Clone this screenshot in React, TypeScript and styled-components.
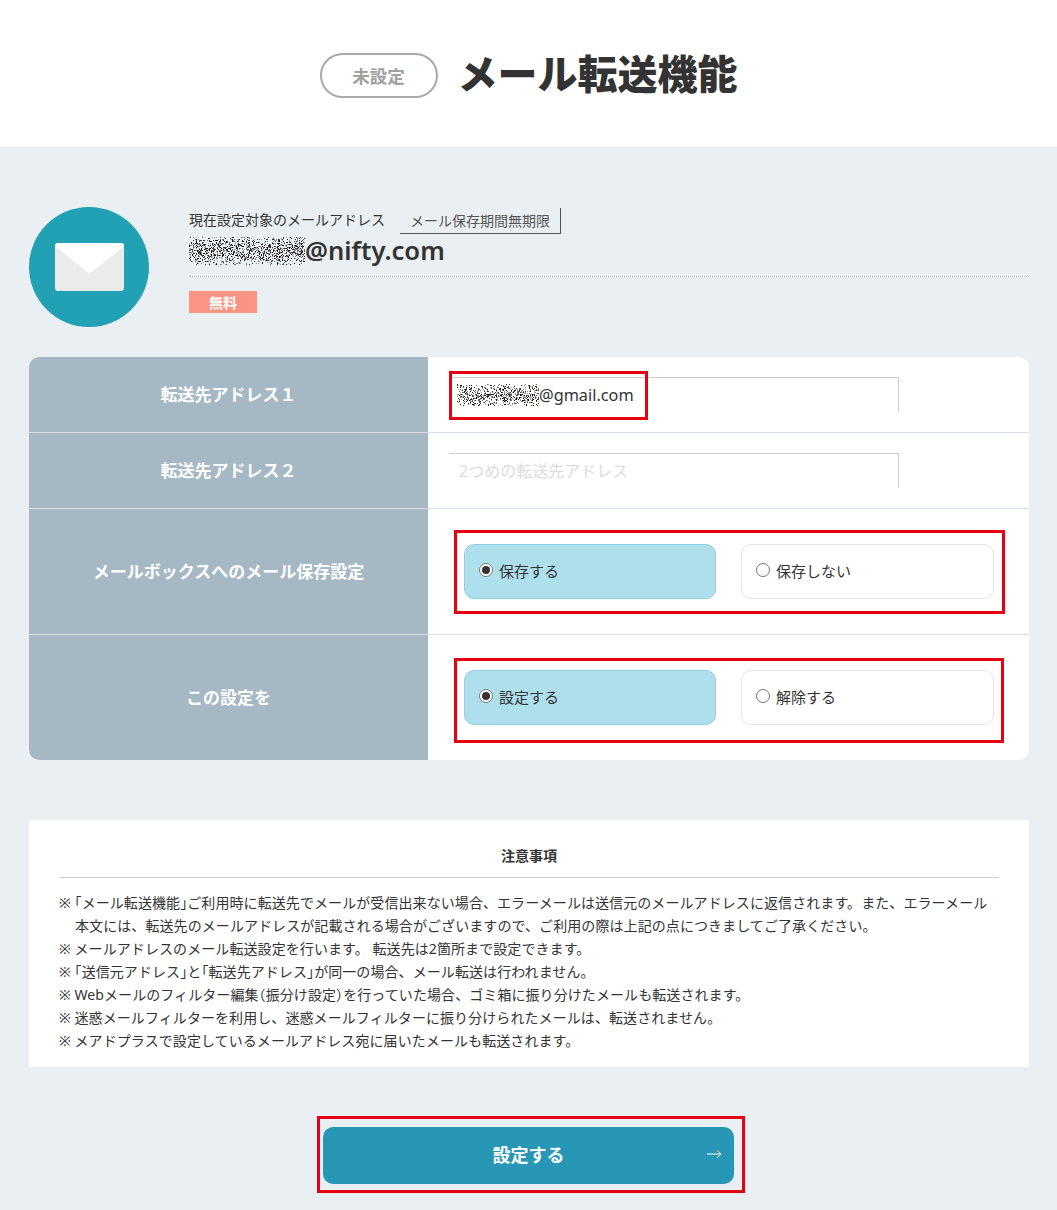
import styled, { createGlobalStyle } from "styled-components";

const GlobalStyle = createGlobalStyle`
  html, body {
    margin: 0;
    padding: 0;
    background: #e9eff2;
    color: #333;
    font-family: "Noto Sans", "Noto Sans CJK JP", sans-serif;
  }
  * {
    box-sizing: border-box;
  }
`;

const Page = styled.div`
  width: 1057px;
  height: 1210px;
  overflow: hidden;
`;

const Header = styled.header`
  height: 148px;
  background: #fff;
  display: flex;
  align-items: center;
  justify-content: center;
  gap: 20px;
  padding: 3px 0 0 0;
  box-shadow: inset 0 -1px 0 #e6ecef;
`;

const StatusPill = styled.div`
  width: 118px;
  height: 45px;
  border: 2px solid #a9a9a9;
  border-radius: 23px;
  display: flex;
  align-items: center;
  justify-content: center;
  color: #a0a0a0;
  font-size: 17.5px;
  font-weight: 700;
  padding-bottom: 1px;
`;

const Title = styled.h1`
  margin: 0;
  font-size: 40px;
  font-weight: 900;
  line-height: 46px;
  padding-bottom: 4px;
  color: #333;
`;

const Main = styled.main`
  padding: 59px 28px 0 29px;
`;

const Account = styled.section`
  display: flex;
  gap: 40px;
  height: 150px;
`;

const MailBadge = styled.div`
  width: 120px;
  height: 120px;
  border-radius: 50%;
  background: #22a1b5;
  display: flex;
  align-items: center;
  justify-content: center;
  flex: none;
`;

const AccountInfo = styled.div`
  flex: 1;
  padding-top: 1px;
`;

const AddressHead = styled.div`
  display: flex;
  align-items: flex-end;
  gap: 15px;
  height: 26px;
  font-size: 14px;
  color: #333;
`;

const AddressLabel = styled.span`
  line-height: 24px;
  padding-bottom: 2px;
`;

const Term = styled.span`
  height: 26px;
  padding: 0 10px;
  border-right: 1px solid #555;
  border-bottom: 1px solid #555;
  color: #555;
  line-height: 26px;
`;

const AddressLine = styled.div`
  display: flex;
  align-items: center;
  height: 43px;
  padding-bottom: 8px;
  font-size: 25.6px;
  font-weight: 600;
  color: #333;
  border-bottom: 1px dotted #b5b9bb;
  line-height: 32px;
`;

const PriceTag = styled.div`
  margin-top: 14px;
  width: 68px;
  height: 22px;
  background: #fb9482;
  color: #fff;
  font-size: 14px;
  font-weight: 700;
  text-align: center;
  line-height: 24px;
`;

const FormTable = styled.div`
  border-radius: 10px;
  overflow: hidden;
  background: #fff;
`;

const Row = styled.div<{ $height: number; $last?: boolean }>`
  display: grid;
  grid-template-columns: 400px 1fr;
  height: ${(props) => props.$height}px;
  border-bottom: ${(props) => (props.$last ? "none" : "1px solid #d9dfe2")};
`;

const RowLabel = styled.div`
  background: #a5b8c4;
  color: #fff;
  font-size: 17px;
  font-weight: 700;
  display: flex;
  align-items: center;
  justify-content: center;
  border-right: 1px solid #fff;
  padding-bottom: 3px;
`;

const FieldCell = styled.div`
  padding: 20px 0 0 20px;
`;

const Field = styled.div<{ $placeholder?: boolean }>`
  position: relative;
  width: 450px;
  height: 35px;
  border-top: 1px solid #ccc;
  border-right: 1px solid #ccc;
  padding: ${(props) => (props.$placeholder ? "0 0 2px 10px" : "0 0 0 8px")};
  display: flex;
  align-items: center;
  font-size: ${(props) => (props.$placeholder ? "16px" : "16.3px")};
  color: ${(props) => (props.$placeholder ? "#dcdcdc" : "#333")};
`;

const FieldMark = styled.div`
  position: absolute;
  left: 0;
  top: -7px;
  width: 199px;
  height: 49px;
  border: 3px solid #e50012;
`;

const ChoiceCell = styled.div<{ $lower?: boolean }>`
  padding: ${(props) => (props.$lower ? "23px" : "21px")} 0 0 25px;
`;

const ChoiceMark = styled.div<{ $lower?: boolean }>`
  width: ${(props) => (props.$lower ? 550 : 551)}px;
  height: ${(props) => (props.$lower ? 85 : 84)}px;
  border: 3px solid #e50012;
  padding: ${(props) => (props.$lower ? "9px" : "11px")} 0 0 7px;
  display: grid;
  grid-template-columns: 252px 253px;
  grid-template-rows: 55px;
  column-gap: 25px;
`;

const Choice = styled.div<{ $on?: boolean }>`
  border-radius: 10px;
  border: 1px solid ${(props) => (props.$on ? "#93cfdf" : "#e3e6e8")};
  background: ${(props) => (props.$on ? "#aedfed" : "#fff")};
  display: flex;
  align-items: center;
  gap: 6px;
  padding: 0 0 3px 14px;
  font-size: 15px;
  color: #333;
`;

const Radio = styled.span<{ $on?: boolean }>`
  width: 14px;
  height: 14px;
  border-radius: 50%;
  border: 1px solid #777;
  background: #fff;
  display: flex;
  align-items: center;
  justify-content: center;

  &::after {
    content: "";
    width: 8px;
    height: 8px;
    border-radius: 50%;
    background: ${(props) => (props.$on ? "#333" : "transparent")};
  }
`;

const Notes = styled.section`
  margin-top: 60px;
  height: 247px;
  background: #fff;
  padding: 25px 30px 0;
`;

const NotesTitle = styled.h2`
  margin: 0;
  height: 33px;
  border-bottom: 1px solid #ccc;
  font-size: 14px;
  font-weight: 700;
  line-height: 22px;
  text-align: center;
  color: #333;
`;

const NoteList = styled.ul`
  list-style: none;
  margin: 13px 0 0;
  padding: 0;
  font-size: 14px;
  line-height: 23px;
  letter-spacing: 0.08px;
  color: #333;
`;

const Note = styled.li`
  padding-left: 16px;
  text-indent: -16px;
`;

// half-width brackets, the page sets them tight
const Tight = styled.span`
  font-feature-settings: "halt";
`;

const SubmitArea = styled.div`
  margin: 49px 0 0 288px;
  width: 428px;
  height: 77px;
  border: 3px solid #e50012;
  padding: 8px 0 0 3px;
`;

const SubmitButton = styled.button`
  position: relative;
  width: 411px;
  height: 57px;
  padding: 0 0 3px;
  border: none;
  border-radius: 10px;
  background: #2797b5;
  color: #fff;
  font-family: inherit;
  font-size: 18px;
  font-weight: 700;
`;

const Arrow = styled.span`
  position: absolute;
  right: 12px;
  top: 27px;
  transform: translateY(-50%);
  display: flex;
`;

// mosaic noise standing in for the masked part of an address
const Blur = ({ width, height, seed }: { width: number; height: number; seed: number }) => {
  const dots = [];
  let n = seed;
  for (let y = 0; y < height; y++) {
    for (let x = 0; x < width; x++) {
      n = (n * 1103515245 + 12345) & 0x7fffffff;
      const edge = Math.abs(y - height / 2) / (height / 2);
      if ((n >> 8) % 100 < 52 - edge * 36) {
        const shade = ["#111", "#333", "#666", "#999"][(n >> 16) % 4];
        dots.push(<rect key={`${x}-${y}`} x={x} y={y} width={1} height={1} fill={shade} />);
      }
    }
  }
  return (
    <svg width={width} height={height} viewBox={`0 0 ${width} ${height}`} style={{ flex: "none" }}>
      {dots}
    </svg>
  );
};

const MailIcon = () => (
  <svg width="69" height="48" viewBox="0 0 69 48">
    <rect width="69" height="48" rx="3" fill="#ebebeb" />
    <path d="M0 3a3 3 0 0 1 3-3h63a3 3 0 0 1 3 3L37 29a4 4 0 0 1-5 0z" fill="#fff" />
  </svg>
);

const App = () => (
  <Page>
    <GlobalStyle />
    <Header>
      <StatusPill>未設定</StatusPill>
      <Title>メール転送機能</Title>
    </Header>
    <Main>
      <Account>
        <MailBadge>
          <MailIcon />
        </MailBadge>
        <AccountInfo>
          <AddressHead>
            <AddressLabel>現在設定対象のメールアドレス</AddressLabel>
            <Term>メール保存期間無期限</Term>
          </AddressHead>
          <AddressLine>
            <Blur width={116} height={28} seed={7} />
            @nifty.com
          </AddressLine>
          <PriceTag>無料</PriceTag>
        </AccountInfo>
      </Account>
      <FormTable>
        <Row $height={76}>
          <RowLabel>転送先アドレス１</RowLabel>
          <FieldCell>
            <Field>
              <Blur width={82} height={22} seed={21} />
              @gmail.com
              <FieldMark />
            </Field>
          </FieldCell>
        </Row>
        <Row $height={76}>
          <RowLabel>転送先アドレス２</RowLabel>
          <FieldCell>
            <Field $placeholder>2つめの転送先アドレス</Field>
          </FieldCell>
        </Row>
        <Row $height={126}>
          <RowLabel>メールボックスへのメール保存設定</RowLabel>
          <ChoiceCell>
            <ChoiceMark>
              <Choice $on>
                <Radio $on />
                保存する
              </Choice>
              <Choice>
                <Radio />
                保存しない
              </Choice>
            </ChoiceMark>
          </ChoiceCell>
        </Row>
        <Row $height={125} $last>
          <RowLabel>この設定を</RowLabel>
          <ChoiceCell $lower>
            <ChoiceMark $lower>
              <Choice $on>
                <Radio $on />
                設定する
              </Choice>
              <Choice>
                <Radio />
                解除する
              </Choice>
            </ChoiceMark>
          </ChoiceCell>
        </Row>
      </FormTable>
      <Notes>
        <NotesTitle>注意事項</NotesTitle>
        <NoteList>
          <Note>
            ※ <Tight>「</Tight>メール転送機能<Tight>」</Tight>ご利用時に転送先でメールが受信出来ない場合、エラーメールは送信元のメールアドレスに返信されます。また、エラーメール
            <br />
            本文には、転送先のメールアドレスが記載される場合がございますので、ご利用の際は上記の点につきましてご了承ください。
          </Note>
          <Note>※ メールアドレスのメール転送設定を行います。 転送先は2箇所まで設定できます。</Note>
          <Note>
            ※ <Tight>「</Tight>送信元アドレス<Tight>」</Tight>と<Tight>「</Tight>転送先アドレス<Tight>」</Tight>が同一の場合、メール転送は行われません。
          </Note>
          <Note>
            ※ Webメールのフィルター編集<Tight>（</Tight>振分け設定<Tight>）</Tight>を行っていた場合、ゴミ箱に振り分けたメールも転送されます。
          </Note>
          <Note>※ 迷惑メールフィルターを利用し、迷惑メールフィルターに振り分けられたメールは、転送されません。</Note>
          <Note>※ メアドプラスで設定しているメールアドレス宛に届いたメールも転送されます。</Note>
        </NoteList>
      </Notes>
      <SubmitArea>
        <SubmitButton>
          設定する
          <Arrow>
            <svg width="15" height="10" viewBox="0 0 15 10" fill="none" stroke="#fff" strokeWidth="1">
              <path d="M0 5h14M10 1l4 4-4 4" />
            </svg>
          </Arrow>
        </SubmitButton>
      </SubmitArea>
    </Main>
  </Page>
);

export default App;
